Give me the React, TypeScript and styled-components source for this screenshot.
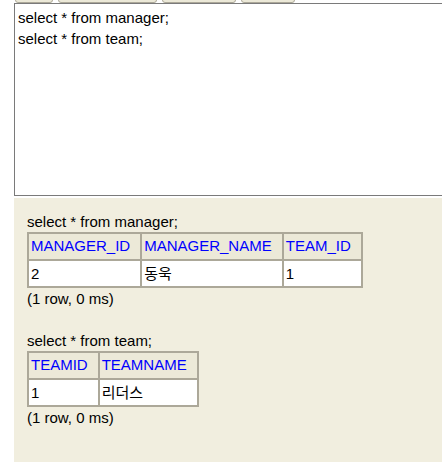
import styled, { createGlobalStyle } from 'styled-components';

const GlobalStyle = createGlobalStyle`
  html, body {
    margin: 0;
    padding: 0;
    background: #ffffff;
    overflow: hidden;
  }
  body {
    font-family: "Liberation Sans", Arial, "Noto Sans CJK KR", sans-serif;
  }
`;

interface ResultSet {
  sql: string;
  columns: string[];
  rows: string[][];
  stats: string;
}

const results: ResultSet[] = [
  {
    sql: 'select * from manager;',
    columns: ['MANAGER_ID', 'MANAGER_NAME', 'TEAM_ID'],
    rows: [['2', '동욱', '1']],
    stats: '(1 row, 0 ms)',
  },
  {
    sql: 'select * from team;',
    columns: ['TEAMID', 'TEAMNAME'],
    rows: [['1', '리더스']],
    stats: '(1 row, 0 ms)',
  },
];

const tabs = [38, 99, 74, 54];

const App = () => {
  return (
    <Page>
      <GlobalStyle />
      <Toolbar>
        {tabs.map((w, i) => (
          <ToolButton key={i} $width={w} />
        ))}
      </Toolbar>
      <Editor
        readOnly
        spellCheck={false}
        value={'select * from manager;\nselect * from team;'}
      />
      <Output>
        {results.map((r, i) => (
          <Block key={i}>
            <Line>{r.sql}</Line>
            <ResultTable>
              <thead>
                <tr>
                  {r.columns.map((c) => (
                    <Th key={c}>{c}</Th>
                  ))}
                </tr>
              </thead>
              <tbody>
                {r.rows.map((row, ri) => (
                  <tr key={ri}>
                    {row.map((v, vi) => (
                      <Td key={vi}>{v}</Td>
                    ))}
                  </tr>
                ))}
              </tbody>
            </ResultTable>
            <Line>{r.stats}</Line>
          </Block>
        ))}
      </Output>
    </Page>
  );
};

export default App;

const Page = styled.div`
  display: flex;
  flex-direction: column;
  height: 100vh;
  padding-left: 14px;
  box-sizing: border-box;
  overflow: hidden;
`;

const Toolbar = styled.div`
  display: flex;
  align-items: flex-end;
  gap: 5px;
  height: 3px;
  padding-left: 1px;
  overflow: hidden;
  flex-shrink: 0;
`;

const ToolButton = styled.div<{ $width: number }>`
  width: ${({ $width }) => $width}px;
  height: 20px;
  flex-shrink: 0;
  box-sizing: border-box;
  background: #ece9d8;
  border: 1px solid #aca899;
  border-radius: 3px;
`;

const Editor = styled.textarea`
  display: block;
  flex-shrink: 0;
  width: 460px;
  height: 193px;
  margin: 0;
  padding: 3px 3px 2px;
  box-sizing: border-box;
  border: 1px solid #7a7a7a;
  resize: none;
  overflow: hidden;
  outline: none;
  background: #ffffff;
  color: #000000;
  font-family: "Liberation Sans", Arial, sans-serif;
  font-size: 15px;
  line-height: 21px;
`;

const Output = styled.div`
  flex: 1;
  width: 460px;
  margin-top: 2px;
  padding: 15px 13px;
  box-sizing: border-box;
  background: #f1eedf;
  display: flex;
  flex-direction: column;
  gap: 25px;
`;

const Block = styled.div`
  display: flex;
  flex-direction: column;
  align-items: flex-start;
  gap: 2px;
`;

const Line = styled.div`
  font-size: 15px;
  line-height: 17px;
  color: #000000;
`;

const ResultTable = styled.table`
  border-collapse: collapse;
  border: 2px solid #aca899;
  font-size: 15px;
  line-height: 17px;
`;

const Th = styled.th`
  background: #ece9d8;
  color: #0000ff;
  font-weight: normal;
  text-align: left;
  vertical-align: top;
  padding: 3px 10px 5px 2px;
  border: 2px solid #aca899;
  white-space: nowrap;
`;

const Td = styled.td`
  background: #ffffff;
  color: #000000;
  text-align: left;
  vertical-align: top;
  padding: 4px 10px 4px 2px;
  border: 2px solid #aca899;
  white-space: nowrap;
  font-family: "Liberation Sans", Arial, "Noto Sans CJK KR", sans-serif;
`;
